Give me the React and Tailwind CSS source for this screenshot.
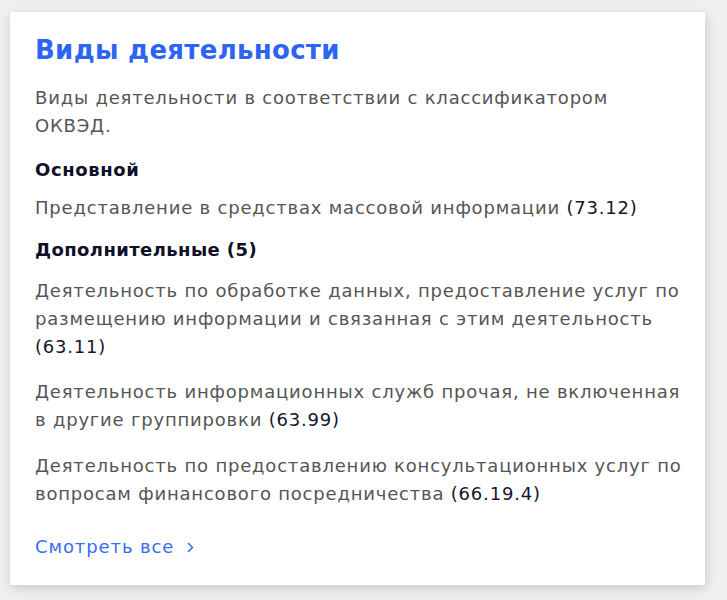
function Code({ children }) {
  return <span className="text-[#16162e]">{children}</span>;
}

export default function App() {
  return (
    <div className="min-h-[600px] w-[727px] bg-[#efefef] pt-3 pl-[10px] font-['DejaVu_Sans',sans-serif]">
      <div className="flex h-[573px] w-[695px] flex-col items-start bg-white pl-[25px] pr-[10px] pt-[22px] shadow-[1px_3px_10px_rgba(0,0,0,0.16)]">
        <h2 className="text-[26px] leading-[32px] font-semibold tracking-[0.3px] text-[#2e64f2]">
          Виды деятельности
        </h2>
        <p className="mt-[18px] text-[18px] leading-[28px] tracking-[0.8px] text-[#555555]">
          Виды деятельности в соответствии с классификатором
          <br />
          ОКВЭД.
        </p>
        <h3 className="mt-[16px] text-[18px] leading-[28px] font-bold tracking-[0.6px] text-[#10102a]">
          Основной
        </h3>
        <p className="mt-[10px] text-[18px] leading-[28px] tracking-[0.8px] text-[#555555]">
          Представление в средствах массовой информации <Code>(73.12)</Code>
        </p>
        <h3 className="mt-[14px] text-[18px] leading-[28px] font-bold tracking-[0.4px] text-[#10102a]">
          Дополнительные (5)
        </h3>
        <p className="mt-[13px] text-[18px] leading-[28px] tracking-[0.8px] text-[#555555]">
          Деятельность по обработке данных, предоставление услуг по
          <br />
          размещению информации и связанная с этим деятельность
          <br />
          <Code>(63.11)</Code>
        </p>
        <p className="mt-[17px] text-[18px] leading-[28px] tracking-[0.8px] text-[#555555]">
          Деятельность информационных служб прочая, не включенная
          <br />
          в другие группировки <Code>(63.99)</Code>
        </p>
        <p className="mt-[18px] text-[18px] leading-[28px] tracking-[0.8px] text-[#555555]">
          Деятельность по предоставлению консультационных услуг по
          <br />
          вопросам финансового посредничества <Code>(66.19.4)</Code>
        </p>
        <a
          href="#"
          className="mt-[25px] flex items-center gap-[13px] text-[18px] leading-[28px] tracking-[0.9px] text-[#3a6cf3]"
        >
          <span>Смотреть все</span>
          <svg width="7" height="11" viewBox="0 0 7 11" fill="none">
            <path d="M1.5 1.5l4 4-4 4" stroke="#3a6cf3" strokeWidth="1.6" strokeLinecap="round" strokeLinejoin="round" />
          </svg>
        </a>
      </div>
    </div>
  );
}
